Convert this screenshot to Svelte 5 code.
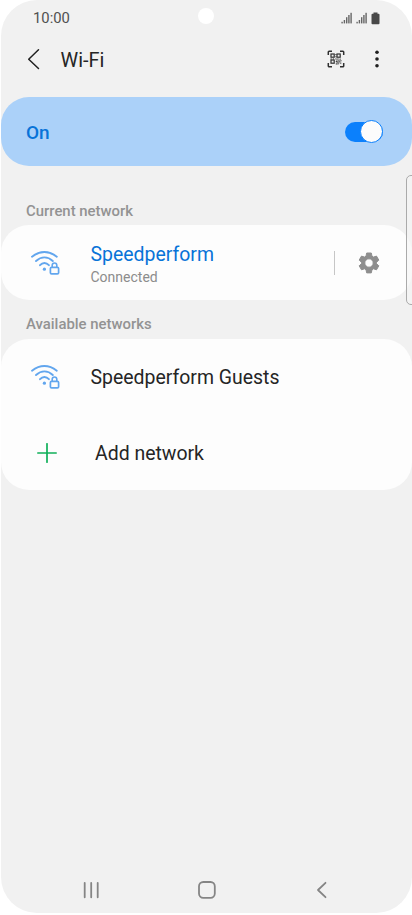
<script>
  const finders = [
    [4, 4], [10, 4], [4, 10]
  ];
  const dots = [[8.4, 4], [8.4, 6.2], [3.6, 8.4], [5.8, 8.4], [8.4, 8.4], [10.4, 8.4], [12.6, 8.6], [9.4, 9.6], [11.4, 9.8], [13.4, 10.2], [8.8, 11], [10.4, 11], [12.2, 11.2], [9.6, 12.2], [11.2, 12.4], [13.2, 12.6], [10.4, 13.4], [8.8, 13.4]];
</script>

{#snippet signal()}
  <svg width="12" height="12" viewBox="0 0 12 12" fill="#666">
    <rect x="0.4" y="9.8" width="1.4" height="1.6" /><rect x="2.7" y="8" width="1.4" height="3.4" />
    <rect x="5" y="5.2" width="1.4" height="6.2" /><rect x="7.2" y="3" width="1.4" height="8.4" />
    <rect x="9.4" y="0.8" width="1.4" height="10.6" />
  </svg>
{/snippet}

{#snippet wifi()}
  <svg class="wifi" width="30" height="26" viewBox="0 0 30 26" fill="none" stroke="#62a6ee" stroke-width="1.9" stroke-linecap="round">
    <path d="M2 6.700Q8 2 14.400 2Q20.800 2 26.800 6.700" />
    <path d="M6 11Q10 7.400 14.400 7.400Q19 7.400 22.800 11" />
    <path d="M10 15.200Q12 13 14.400 13Q16.900 13 18.900 15.200" />
    <circle cx="14.400" cy="19.200" r="1.600" fill="#62a6ee" stroke="none" />
    <rect x="20.400" y="17.300" width="8.200" height="6.600" rx="1.200" stroke-width="1.700" />
    <path d="M22.200 17.300V15.300a2.300 2.300 0 0 1 4.600 0V17.300" stroke-width="1.600" />
  </svg>
{/snippet}

<div class="screen">
  <div class="status">
    <span>10:00</span>
    <div class="indicators">
      {@render signal()}
      {@render signal()}
      <svg width="9" height="13" viewBox="0 0 9 13" fill="#484848"><path d="M2.500 0.500h4v1.200h1q1 0 1 1v8.600q0 1-1 1h-6q-1 0-1-1V2.700q0-1 1-1h1z" /></svg>
    </div>
    <i class="camera"></i>
  </div>

  <header>
    <svg width="14" height="22" viewBox="0 0 14 22" fill="none" stroke="#202020" stroke-width="1.500" stroke-linecap="round" stroke-linejoin="round"><path d="M11.500 1.800L1.700 11.200L11.500 20.500" /></svg>
    <h1>Wi-Fi</h1>
    <svg class="scan" width="18" height="18" viewBox="0 0 18 18" fill="none" stroke="#303030">
      <path d="M1.300 5V2Q1.300 1.200 2.100 1.200H5M13 1.200h2.900q.8 0 .8.800V5M16.700 13v3q0 .8-.8.800H13M5 16.800H2.100Q1.300 16.800 1.300 16V13" stroke-width="1.500" />
      {#each finders as [x, y]}
        <rect {x} {y} width="3.200" height="3.200" stroke-width="1.200" />
      {/each}
      {#each dots as [x, y]}
        <rect {x} {y} width="1.100" height="1.100" fill="#303030" stroke="none" />
      {/each}
    </svg>
    <svg class="more" width="6" height="20" viewBox="0 0 6 20" fill="#202020"><circle cx="3" cy="3.300" r="1.800" /><circle cx="3" cy="10" r="1.800" /><circle cx="3" cy="16.700" r="1.800" /></svg>
  </header>

  <section class="power">
    <strong>On</strong>
    <div class="switch"><i></i></div>
  </section>

  <h2 class="current">Current network</h2>
  <section class="card connected">
    {@render wifi()}
    <div class="name">
      <span class="title">Speedperform</span>
      <span class="sub">Connected</span>
    </div>
    <i class="divider"></i>
    <svg class="gear" width="24" height="24" viewBox="0 0 24 24" fill="#8e8e8e" stroke="#8e8e8e" stroke-width="1" stroke-linejoin="round"><path fill-rule="evenodd" d="M9.700 2h4.600l.7 3.200 1.500.9 3-1 2.300 4-2.300 2.200v1.400l2.300 2.100-2.300 4-3-1-1.500.9-.7 3.200H9.700L9 18.700l-1.500-.9-3 1-2.300-4 2.300-2.100v-1.400L2.200 9.100l2.300-4 3 1L9 5.200zM12 7.800a4.200 4.200 0 1 0 0 8.400 4.200 4.200 0 0 0 0-8.400z" /></svg>
  </section>

  <h2 class="available">Available networks</h2>
  <section class="card list">
    <div class="row">
      {@render wifi()}
      <span class="title">Speedperform Guests</span>
    </div>
    <div class="row add">
      <svg width="20" height="20" viewBox="0 0 20 20" stroke="#10b05a" stroke-width="1.700" stroke-linecap="round"><path d="M10 .8v18.400M.8 10h18.400" /></svg>
      <span class="title">Add network</span>
    </div>
  </section>

  <nav>
    <svg width="18" height="18" viewBox="0 0 18 18" stroke="#858585" stroke-width="1.800" stroke-linecap="round"><path d="M1.700 1.800v14.500M8.200 1.800v14.500M14.700 1.800v14.500" /></svg>
    <svg class="home" width="18" height="18" viewBox="0 0 18 18" fill="none" stroke="#858585" stroke-width="1.800"><rect x="1" y="1" width="15.800" height="15.800" rx="4.300" /></svg>
    <svg width="12" height="18" viewBox="0 0 12 18" fill="none" stroke="#858585" stroke-width="1.800" stroke-linecap="round" stroke-linejoin="round"><path d="M9.500 1.800L2 9L9.500 16.200" /></svg>
  </nav>

  <i class="edge"></i>
</div>

<style>
  :global(body) { background: #fff; }
  .screen {
    position: relative;
    display: flex;
    flex-direction: column;
    box-sizing: border-box;
    width: 411.500px;
    height: 913px;
    margin-left: .5px;
    overflow: hidden;
    border-radius: 36px;
    background: #f1f1f1;
    font-family: Roboto, sans-serif;
    color: #252525;
  }
  svg { display: block; flex: none; }
  .status {
    position: relative;
    display: flex;
    align-items: center;
    justify-content: space-between;
    height: 36px;
    padding: 0 32px 0 32.500px;
    box-sizing: border-box;
    font-size: 14.800px;
    color: #505050;
  }
  .indicators { display: flex; align-items: center; gap: 3px; }
  .camera {
    position: absolute;
    left: 197.500px;
    top: 8px;
    width: 16px;
    height: 16px;
    border-radius: 50%;
    background: #fff;
  }
  header { display: flex; align-items: center; height: 46px; margin-bottom: 15px; padding: 0 32px 0 26.500px; }
  h1 { flex: 1; margin: 2px 0 0 19.500px; font-size: 19.900px; font-weight: 400; }
  .more { margin-left: 29px; }
  .power {
    display: flex;
    align-items: center;
    justify-content: space-between;
    box-sizing: border-box;
    height: 69px;
    padding: 0 29px 0 25.500px;
    border-radius: 28px;
    background: #abd1f9;
  }
  strong { margin-top: 1px; font-size: 19px; font-weight: 500; color: #0873d8; }
  .switch {
    display: flex;
    align-items: center;
    justify-content: flex-end;
    width: 38.500px;
    height: 20px;
    border-radius: 10px;
    background: #0b80fc;
  }
  .switch i { box-sizing: border-box; flex: none; width: 23px; height: 23px; border: 1px solid #0b80fc; border-radius: 50%; background: #fcfcfc; }
  h2 { margin: 0; padding-left: 25.500px; font-size: 14.900px; line-height: 20px; font-weight: 500; color: #939393; }
  .current { margin-top: 35px; margin-bottom: 4px; }
  .available { margin-top: 14px; margin-bottom: 5px; }
  .card { border-radius: 28px; background: #fdfdfd; }
  .connected { display: flex; align-items: center; box-sizing: border-box; height: 75px; padding-left: 29.500px; padding-right: 31px; }
  .name { display: flex; flex: 1; flex-direction: column; margin: 5px 0 0 30.500px; }
  .title { font-size: 19.450px; line-height: 24px; }
  .name .title { color: #0873d8; }
  .sub { font-size: 14px; line-height: 20px; color: #8c8c8c; }
  .divider { width: 1px; height: 24px; margin-right: 22px; background: #c6c6c6; }
  .row { display: flex; align-items: center; height: 76px; padding-left: 29.500px; }
  .row .title { margin: 1px 0 0 30.500px; }
  .row.add { height: 75px; padding-left: 36.500px; }
  .row.add .title { margin: 2px 0 0 38px; }
  nav { display: flex; justify-content: space-between; margin-top: auto; padding: 0 84px 14px 82.500px; }
  .home { margin-right: 3.500px; }
  .edge {
    position: absolute;
    right: -8px;
    top: 175px;
    box-sizing: border-box;
    width: 14px;
    height: 130px;
    border: 1px solid #aaa;
    border-radius: 5px;
    background: rgba(245, 245, 245, .6);
  }
</style>
